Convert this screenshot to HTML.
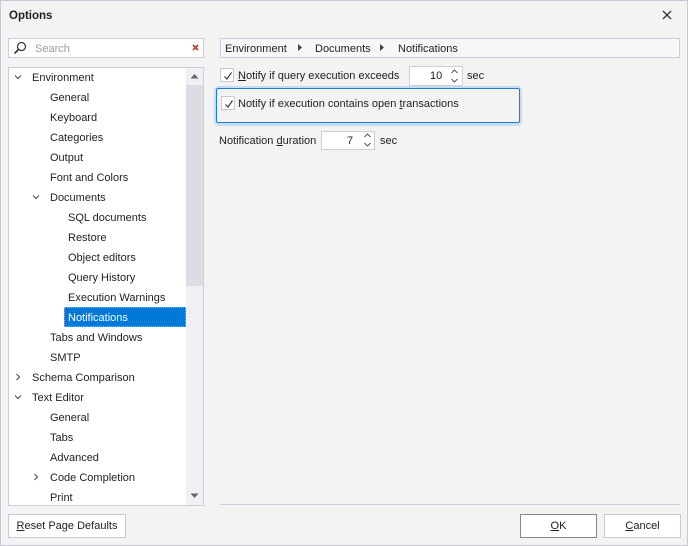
<!DOCTYPE html><html><head><style>
*{box-sizing:border-box;margin:0;padding:0}
body{width:688px;height:546px;background:#f3f3f3;font-family:"Liberation Sans",sans-serif;font-size:11px;color:#222;position:relative;overflow:hidden}
.a{position:absolute}
.box{position:absolute;background:#fff;border:1px solid #cfcfdc}
.t{position:absolute;white-space:nowrap;line-height:20px;margin-top:1px}
.cb{position:absolute;width:14px;height:14px;border:1px solid #c9c9d6;background:#fff}
.cb svg{position:absolute;left:1px;top:1px}
.btn{position:absolute;background:#fff;border:1px solid #c9c9d6;text-align:center;line-height:22px}
</style></head><body>
<div class="a" style="left:0;top:0;width:688px;height:546px;border:1px solid #c9c9d6"></div>
<div class="t" style="left:9px;top:5px;font-weight:bold;font-size:11.5px">Options</div>
<svg class="a" style="left:662px;top:10px" width="10" height="10"><path d="M1 1L9 9M9 1L1 9" stroke="#333" stroke-width="1.3"/></svg>

<div class="box" style="left:8px;top:38px;width:196px;height:20px"></div>
<svg class="a" style="left:13px;top:41px" width="14" height="14"><circle cx="8.5" cy="5.5" r="4" fill="none" stroke="#333" stroke-width="1.2"/><path d="M5.5 8.5L1.5 12.5" stroke="#333" stroke-width="1.6"/></svg>
<div class="t" style="left:35px;top:38px;color:#9a9aa8">Search</div>
<svg class="a" style="left:192px;top:44px" width="7" height="7"><path d="M1 1L6 6M6 1L1 6" stroke="#c0392b" stroke-width="1.6"/></svg>

<div class="box" style="left:8px;top:67px;width:196px;height:439px"></div>
<div class="a" style="left:186px;top:68px;width:17px;height:437px;background:#f0f0f4"></div>
<div class="a" style="left:186px;top:85px;width:17px;height:201px;background:#dcdce4"></div>
<svg class="a" style="left:190px;top:73px" width="9" height="6"><path d="M0.5 5.5L4.5 1L8.5 5.5Z" fill="#666"/></svg>
<svg class="a" style="left:190px;top:493px" width="9" height="6"><path d="M0.5 0.5L4.5 5L8.5 0.5Z" fill="#666"/></svg>
<div class="a" style="left:64px;top:307px;width:122px;height:20px;background:#0078d7;outline:1px dotted #aac;outline-offset:-1px"></div>

<svg class="a" style="left:14px;top:74px" width="8" height="6"><path d="M1 1.5L4 4.5L7 1.5" fill="none" stroke="#555" stroke-width="1.2"/></svg>
<svg class="a" style="left:32px;top:194px" width="8" height="6"><path d="M1 1.5L4 4.5L7 1.5" fill="none" stroke="#555" stroke-width="1.2"/></svg>
<svg class="a" style="left:15px;top:373px" width="6" height="8"><path d="M1.5 1L4.5 4L1.5 7" fill="none" stroke="#555" stroke-width="1.2"/></svg>
<svg class="a" style="left:14px;top:394px" width="8" height="6"><path d="M1 1.5L4 4.5L7 1.5" fill="none" stroke="#555" stroke-width="1.2"/></svg>
<svg class="a" style="left:33px;top:473px" width="6" height="8"><path d="M1.5 1L4.5 4L1.5 7" fill="none" stroke="#555" stroke-width="1.2"/></svg>

<div class="t" style="left:32px;top:67px">Environment</div>
<div class="t" style="left:50px;top:87px">General</div>
<div class="t" style="left:50px;top:107px">Keyboard</div>
<div class="t" style="left:50px;top:127px">Categories</div>
<div class="t" style="left:50px;top:147px">Output</div>
<div class="t" style="left:50px;top:167px">Font and Colors</div>
<div class="t" style="left:50px;top:187px">Documents</div>
<div class="t" style="left:68px;top:207px">SQL documents</div>
<div class="t" style="left:68px;top:227px">Restore</div>
<div class="t" style="left:68px;top:247px">Object editors</div>
<div class="t" style="left:68px;top:267px">Query History</div>
<div class="t" style="left:68px;top:287px">Execution Warnings</div>
<div class="t" style="left:68px;top:307px;color:#fff">Notifications</div>
<div class="t" style="left:50px;top:327px">Tabs and Windows</div>
<div class="t" style="left:50px;top:347px">SMTP</div>
<div class="t" style="left:32px;top:367px">Schema Comparison</div>
<div class="t" style="left:32px;top:387px">Text Editor</div>
<div class="t" style="left:50px;top:407px">General</div>
<div class="t" style="left:50px;top:427px">Tabs</div>
<div class="t" style="left:50px;top:447px">Advanced</div>
<div class="t" style="left:50px;top:467px">Code Completion</div>
<div class="t" style="left:50px;top:487px">Print</div>

<div class="a" style="left:220px;top:38px;width:460px;height:20px;background:#f7f7f9;border:1px solid #cfcfdc"></div>
<div class="t" style="left:225px;top:38px">Environment</div>
<svg class="a" style="left:298px;top:44px" width="4" height="7"><path d="M0 0L4 3.5L0 7Z" fill="#444"/></svg>
<div class="t" style="left:315px;top:38px">Documents</div>
<svg class="a" style="left:380px;top:44px" width="4" height="7"><path d="M0 0L4 3.5L0 7Z" fill="#444"/></svg>
<div class="t" style="left:398px;top:38px">Notifications</div>

<div class="cb" style="left:220px;top:68px"><svg width="12" height="12"><path d="M2.5 6.5L5 9L9.5 2.5" fill="none" stroke="#333" stroke-width="1.1"/></svg></div>
<div class="t" style="left:238px;top:65px"><u>N</u>otify if query execution exceeds</div>
<div class="box" style="left:409px;top:66px;width:54px;height:20px"></div>
<div class="t" style="left:430px;top:65px">10</div>
<svg class="a" style="left:451px;top:69px" width="7" height="14"><path d="M0.5 4L3.5 1L6.5 4M0.5 10L3.5 13L6.5 10" fill="none" stroke="#555"/></svg>
<div class="t" style="left:467px;top:65px">sec</div>

<div class="a" style="left:214px;top:86px;width:308px;height:40px;border:3px solid #c6ddef;border-radius:5px"></div>
<div class="a" style="left:216px;top:88px;width:304px;height:35px;border:1px solid #1a7fd4;border-radius:2px"></div>
<div class="cb" style="left:221px;top:96px"><svg width="12" height="12"><path d="M2.5 6.5L5 9L9.5 2.5" fill="none" stroke="#333" stroke-width="1.1"/></svg></div>
<div class="t" style="left:238px;top:93px">Notify if execution contains open <u>t</u>ransactions</div>

<div class="t" style="left:219px;top:130px">Notification <u>d</u>uration</div>
<div class="box" style="left:321px;top:131px;width:54px;height:19px"></div>
<div class="t" style="left:347px;top:130px">7</div>
<svg class="a" style="left:364px;top:133px" width="7" height="14"><path d="M0.5 4L3.5 1L6.5 4M0.5 10L3.5 13L6.5 10" fill="none" stroke="#555"/></svg>
<div class="t" style="left:380px;top:130px">sec</div>

<div class="a" style="left:220px;top:504px;width:460px;height:1px;background:#cfcfdc"></div>
<div class="btn" style="left:8px;top:514px;width:118px;height:24px"><u>R</u>eset Page Defaults</div>
<div class="btn" style="left:520px;top:514px;width:77px;height:24px;border-color:#888"><u>O</u>K</div>
<div class="btn" style="left:604px;top:514px;width:77px;height:24px"><u>C</u>ancel</div>
</body></html>
